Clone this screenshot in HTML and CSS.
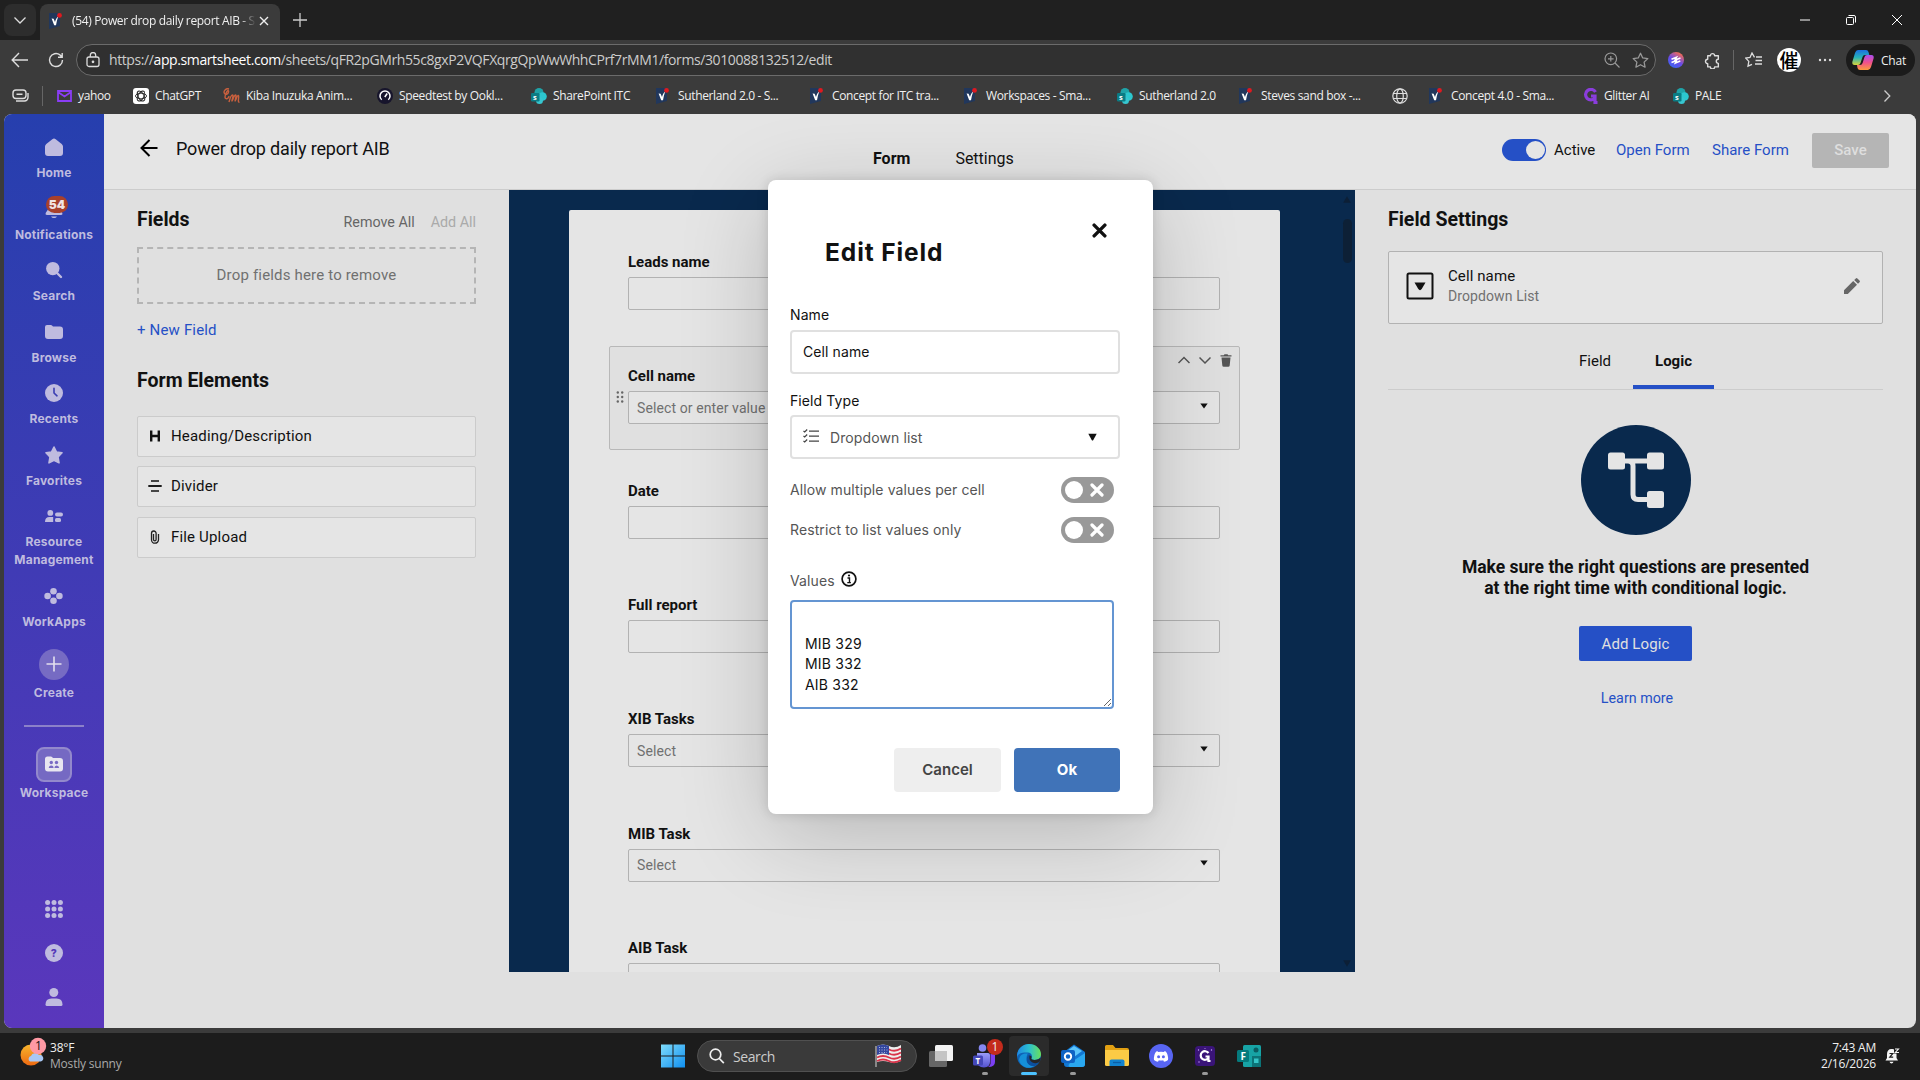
FILE: index.html
```html
<!DOCTYPE html>
<html lang="en">
<head>
    <meta charset="UTF-8">
    <meta name="viewport" content="width=device-width, initial-scale=1.0">
    <title>(54) Power drop daily report AIB</title>
    <link rel="stylesheet" href="styles.css">
</head>
<body>
    <!-- shared icons -->
    <svg class="hidden">
        <symbol id="smartsheet" viewBox="0 0 16 16">
            <path d="M0 0h11v13L0 16z" fill="#21375c"/>
            <path d="M2.600 5.600l2 .1 1.400 3.200c.7-2.800 1.600-4.200 3.200-5.500-1 2.800-1.700 5.600-2.200 8.800H5.200z" fill="#fff"/>
            <circle cx="10.500" cy="2.400" r="2.400" fill="#e0191f"/>
        </symbol>
        <symbol id="sharepoint" viewBox="0 0 16 16">
            <circle cx="8" cy="4.500" r="4.500" fill="#1fa3a8"/>
            <circle cx="11.500" cy="8.500" r="4.300" fill="#2cc7cf"/>
            <circle cx="8.500" cy="12.500" r="3.500" fill="#37c6d0"/>
            <rect x="0" y="5" width="8.500" height="8.500" rx="1.200" fill="#0b7c84"/>
            <text x="2" y="12" font-size="7.500" font-weight="700" fill="#fff">s</text>
        </symbol>
        <symbol id="caret" viewBox="0 0 8 6">
            <path d="M.3.500h7.400L4 5.600z" fill="#111"/>
        </symbol>
        <symbol id="cross" viewBox="0 0 14 14">
            <path d="M2 2l10 10M12 2L2 12" stroke="currentColor" stroke-width="3.200" stroke-linecap="round" fill="none"/>
        </symbol>
    </svg>

    <div class="titlebar">
        <div class="tab-menu"><svg width="14" height="14" viewBox="0 0 14 14"><path d="M1.500 4.500L7 10l5.500-5.500" fill="none" stroke="#ddd" stroke-width="1.300"/></svg></div>
        <div class="tab">
            <svg class="fav" width="16" height="16"><use href="#smartsheet"/></svg>
            <span class="tab-title">(54) Power drop daily report AIB - S</span>
            <svg width="10" height="10" viewBox="0 0 10 10"><path d="M1 1l8 8M9 1L1 9" stroke="#eee" stroke-width="1.400"/></svg>
        </div>
        <svg class="new-tab" width="16" height="16" viewBox="0 0 16 16"><path d="M8 1v14M1 8h14" stroke="#ccc" stroke-width="1.300"/></svg>
        <div class="window-buttons">
            <svg width="12" height="12" viewBox="0 0 12 12"><path d="M1 6h10" stroke="#fff" stroke-width="1"/></svg>
            <svg width="12" height="12" viewBox="0 0 12 12" fill="none" stroke="#fff"><rect x="1.500" y="3.500" width="7" height="7" rx="1"/><path d="M3.500 1.500h5.500a1.500 1.500 0 0 1 1.500 1.500v5.500"/></svg>
            <svg width="12" height="12" viewBox="0 0 12 12"><path d="M1 1l10 10M11 1L1 11" stroke="#fff"/></svg>
        </div>
    </div>

    <div class="toolbar">
        <svg class="nav-back" width="18" height="16" viewBox="0 0 18 16" fill="none" stroke="#ddd" stroke-width="1.400"><path d="M17 8H1.500M8 1L1.200 8 8 15"/></svg>
        <svg class="nav-reload" width="16" height="16" viewBox="0 0 16 16" fill="none" stroke="#ddd" stroke-width="1.400"><path d="M14.500 8A6.500 6.500 0 1 1 12 2.900L14 5M14.200 1v4.300H10"/></svg>
        <div class="address">
            <svg width="14" height="16" viewBox="0 0 14 16" fill="none" stroke="#ddd" stroke-width="1.300"><rect x="1" y="5" width="12" height="9.500" rx="2"/><path d="M4.300 5V3.200a2.700 2.700 0 0 1 5.400 0V5"/><circle cx="7" cy="9.800" r=".7" fill="#ddd"/></svg>
            <span class="url">https://<b>app.smartsheet.com</b>/sheets/qFR2pGMrh55c8gxP2VQFXqrgQpWwWhhCPrf7rMM1/forms/3010088132512/edit</span>
            <svg class="zoom-icon" width="16" height="16" viewBox="0 0 16 16" fill="none" stroke="#999" stroke-width="1.200"><circle cx="6.800" cy="6.800" r="5.800"/><path d="M11 11l4.500 4.500M6.800 4v5.600M4 6.800h5.600"/></svg>
            <svg width="17" height="17" viewBox="0 0 16 16" fill="none" stroke="#999" stroke-width="1.200"><path d="M8 1.200l2.100 4.400 4.800.6-3.500 3.300.9 4.800L8 12l-4.300 2.300.9-4.800L1.100 6.200l4.800-.6z" stroke-linejoin="round"/></svg>
        </div>
        <div class="toolbar-icons">
            <svg class="extension" width="16" height="16" viewBox="0 0 16 16"><defs><linearGradient id="gExt" x1="0" y1="1" x2=".6" y2="0"><stop offset="0" stop-color="#2f6bf5"/><stop offset=".55" stop-color="#6a4be8"/><stop offset="1" stop-color="#f06a5a"/></linearGradient></defs><circle cx="8" cy="8" r="8" fill="url(#gExt)"/><path d="M3.500 7.300l5-2-1.500 2.700 5.500-2M3.500 10.500l5-2-1.200 2.500 5-2" stroke="#fff" stroke-width="1.500" fill="none"/></svg>
            <svg class="puzzle" width="17" height="17" viewBox="0 0 16 16" fill="none" stroke="#ddd" stroke-width="1.300"><path d="M3.500 3.500H6a2 2 0 0 1 4 0h3.500v3.300a1.900 1.900 0 0 0 0 3.900V14H10a2 2 0 0 1-4 0H3.500v-3a2.100 2.100 0 0 1 0-4.200z" stroke-linejoin="round"/></svg>
            <i class="bar-divider"></i>
            <svg class="favorites" width="17" height="16" viewBox="0 0 17 16" fill="none" stroke="#ddd" stroke-width="1.300"><path d="M9.500 5.400L7 1 5 5.500l-4.200.6 3 3.300-.8 4.800L7 12.300M11 5h6M10.500 8.500H17M10 12h7"/></svg>
            <div class="avatar">催</div>
            <svg class="dots" width="14" height="4" viewBox="0 0 14 4" fill="#ddd"><circle cx="2" cy="2" r="1.200"/><circle cx="7" cy="2" r="1.200"/><circle cx="12" cy="2" r="1.200"/></svg>
            <div class="chat">
                <svg width="22" height="20" viewBox="0 0 22 20"><defs><linearGradient id="gCpA" x1="0" y1="0" x2="0" y2="1"><stop offset="0" stop-color="#1c6fe0"/><stop offset=".5" stop-color="#27b3b8"/><stop offset="1" stop-color="#d8d43a"/></linearGradient><linearGradient id="gCpB" x1="0" y1="0" x2="0" y2="1"><stop offset="0" stop-color="#a94df0"/><stop offset=".5" stop-color="#f0508c"/><stop offset="1" stop-color="#fb9a3c"/></linearGradient></defs><path d="M6 0h8q2 0 2.500 2l.8 3H13q-2 0-2.500 2L8.500 13q-.6 2-2.500 2H2.500Q0 15 .3 12L3 3Q4 0 6 0z" fill="url(#gCpA)"/><path d="M16 20H8q-2 0-2.500-2L5 15h3q2 0 2.600-2L12.500 7q.6-2 2.500-2h4.500q2.500 0 2.200 3L19 17q-1 3-3 3z" fill="url(#gCpB)"/></svg>
                <span>Chat</span>
            </div>
        </div>
    </div>

    <div class="bookmarks">
        <svg width="17" height="13" viewBox="0 0 17 13" fill="none" stroke="#ddd" stroke-width="1.400"><rect x="1" y="1" width="13" height="8.500" rx="3"/><path d="M4.500 5.200h6M4 12h8.500a3.500 3.500 0 0 0 3.500-3.500V4"/></svg>
        <i class="bar-divider"></i>
        <div class="bookmark"><svg width="15" height="12" viewBox="0 0 15 12" fill="none" stroke="#8a3df5" stroke-width="1.800"><path d="M1 1h13v10H1zM1 2l6.500 4.500L14 2"/></svg><span>yahoo</span></div>
        <div class="bookmark"><svg width="16" height="16" viewBox="0 0 16 16"><rect width="16" height="16" rx="3" fill="#fff"/><g fill="none" stroke="#222" stroke-width=".9"><ellipse cx="8" cy="8" rx="5.500" ry="2.800"/><ellipse cx="8" cy="8" rx="5.500" ry="2.800" transform="rotate(60 8 8)"/><ellipse cx="8" cy="8" rx="5.500" ry="2.800" transform="rotate(120 8 8)"/></g></svg><span>ChatGPT</span></div>
        <div class="bookmark"><svg width="17" height="16" viewBox="0 0 17 16" fill="none" stroke="#c9603e" stroke-width="1.400"><path d="M6 1C3 0 0 3 1.500 5.500S6 5 5.500 3 2 6 2 9s4 2 4-1M6 14c1-4 2-7 3.500-7s-1 6-.5 6 2-6 3.500-6-.8 6-.3 6 2-6 3.200-5.600S14 15 16.500 14"/></svg><span>Kiba Inuzuka Anim...</span></div>
        <div class="bookmark"><svg width="16" height="16" viewBox="0 0 16 16"><circle cx="8" cy="8" r="8" fill="#17152c"/><path d="M4.700 11.800a5 5 0 1 1 6.600 0M7.800 9l2.400-3.500" fill="none" stroke="#fff" stroke-width="1.500"/></svg><span>Speedtest by Ookl...</span></div>
        <div class="bookmark"><svg width="16" height="16"><use href="#sharepoint"/></svg><span>SharePoint ITC</span></div>
        <div class="bookmark"><svg width="16" height="16"><use href="#smartsheet"/></svg><span>Sutherland 2.0 - S...</span></div>
        <div class="bookmark"><svg width="16" height="16"><use href="#smartsheet"/></svg><span>Concept for ITC tra...</span></div>
        <div class="bookmark"><svg width="16" height="16"><use href="#smartsheet"/></svg><span>Workspaces - Sma...</span></div>
        <div class="bookmark"><svg width="16" height="16"><use href="#sharepoint"/></svg><span>Sutherland 2.0</span></div>
        <div class="bookmark"><svg width="16" height="16"><use href="#smartsheet"/></svg><span>Steves sand box -...</span></div>
        <div class="bookmark"><svg width="16" height="16" viewBox="0 0 16 16" fill="none" stroke="#ddd" stroke-width="1.200"><circle cx="8" cy="8" r="7.200"/><ellipse cx="8" cy="8" rx="3.300" ry="7.200"/><path d="M1.300 5.500h13.400M1.300 10.500h13.400"/></svg></div>
        <div class="bookmark"><svg width="16" height="16"><use href="#smartsheet"/></svg><span>Concept 4.0 - Sma...</span></div>
        <div class="bookmark"><svg width="15" height="16" viewBox="0 0 15 16" fill="none" stroke="#8a3ddc" stroke-width="3.200"><path d="M12.500 4A5.300 5.300 0 1 0 12 10V8H8M12 9v5.500h2.500"/></svg><span>Glitter AI</span></div>
        <div class="bookmark"><svg width="16" height="16"><use href="#sharepoint"/></svg><span>PALE</span></div>
        <svg class="more" width="8" height="14" viewBox="0 0 8 14"><path d="M1.500 1.500L6.800 7l-5.300 5.500" fill="none" stroke="#ccc" stroke-width="1.300"/></svg>
    </div>

    <div class="app">
        <nav class="sidebar">
            <div class="nav-item"><div class="nav-icon"><svg width="18" height="18" viewBox="0 0 18 18"><path d="M7.300 1.200a2.500 2.500 0 0 1 3.400 0l6 4.800A3.300 3.300 0 0 1 18 8.600V15a3 3 0 0 1-3 3H3a3 3 0 0 1-3-3V8.600A3.300 3.300 0 0 1 1.300 6z"/></svg></div><span>Home</span></div>
            <div class="nav-item"><div class="nav-icon bell"><svg width="18" height="18" viewBox="0 0 18 18"><path d="M9 0C5 0 3 3 3 6v3.500L.8 12.800Q0 15 2 15h14q2 0 1.200-2.200L15 9.500V6c0-3-2-6-6-6zM6 16.500h6Q11 18 9 18t-3-1.500z"/></svg><b class="badge">54</b></div><span>Notifications</span></div>
            <div class="nav-item"><div class="nav-icon"><svg width="18" height="18" viewBox="0 0 18 18"><circle cx="7.800" cy="7.600" r="6.700"/><path d="M11 11l5 5" stroke="currentColor" stroke-width="2.400" stroke-linecap="round"/></svg></div><span>Search</span></div>
            <div class="nav-item"><div class="nav-icon"><svg width="18" height="18" viewBox="0 0 18 18"><path d="M0 4a2 2 0 0 1 2-2h4q1 0 2 1.500h7a3 3 0 0 1 3 3V13a3 3 0 0 1-3 3H3a3 3 0 0 1-3-3z"/></svg></div><span>Browse</span></div>
            <div class="nav-item"><div class="nav-icon"><svg width="18" height="18" viewBox="0 0 18 18"><circle cx="9" cy="9" r="9"/><path d="M9 4.200V9l3 2.800" fill="none" stroke="#3a3cb2" stroke-width="1.600" stroke-linecap="round"/></svg></div><span>Recents</span></div>
            <div class="nav-item"><div class="nav-icon"><svg width="18" height="18" viewBox="0 0 18 18"><path d="M9 1l2.500 5 5.500.8-4 4.200 1 5.800L9 14.200l-5 2.600L5 11 1 6.800 6.500 6z" stroke="currentColor" stroke-width="1.600" stroke-linejoin="round"/></svg></div><span>Favorites</span></div>
            <div class="nav-item tall"><div class="nav-icon"><svg width="18" height="12" viewBox="0 0 18 12"><circle cx="5.300" cy="2.900" r="2.900"/><path d="M0 12Q0 7 4.500 7h3.700v5z"/><rect x="10" y="2.500" width="8" height="4" rx="2"/><rect x="10" y="8" width="6" height="4" rx="1.500"/></svg></div><span>Resource<br>Management</span></div>
            <div class="nav-item"><div class="nav-icon"><svg width="19" height="16" viewBox="0 0 19 16"><circle cx="9.500" cy="3.300" r="3.300"/><circle cx="3.600" cy="8" r="3.300"/><circle cx="15.400" cy="8" r="3.300"/><circle cx="9.500" cy="12.700" r="3.300"/></svg></div><span>WorkApps</span></div>
            <div class="nav-item create"><div class="create-icon"><svg width="16" height="16" viewBox="0 0 16 16"><path d="M8 .500v15M.500 8h15" stroke="#e4e0ee" stroke-width="1.600"/></svg></div><span>Create</span></div>
            <div class="nav-line"></div>
            <div class="nav-item workspace"><div class="ws-icon"><svg width="18" height="16" viewBox="0 0 18 16"><path d="M0 3a2.500 2.500 0 0 1 2.500-2.500H6Q7 .500 8 2h7a3 3 0 0 1 3 3v7.500a3 3 0 0 1-3 3H3a3 3 0 0 1-3-3z" fill="#e8e6f0"/><g fill="#7a6bc4"><circle cx="6.300" cy="6.500" r="1.700"/><circle cx="11.500" cy="6.500" r="1.700"/><path d="M3.800 12q0-2.500 2.500-2.500T8.500 12zM9.400 12q0-2.500 2.300-2.500t2.500 2.500z"/></g></svg></div><span>Workspace</span></div>
            <div class="nav-bottom">
                <svg width="18" height="18" viewBox="0 0 18 18"><g id="dots"><circle cx="2.600" cy="2.600" r="2.500"/><circle cx="9" cy="2.600" r="2.500"/><circle cx="15.400" cy="2.600" r="2.500"/></g><use href="#dots" y="6.400"/><use href="#dots" y="12.800"/></svg>
                <svg width="18" height="18" viewBox="0 0 18 18"><circle cx="9" cy="9" r="9"/><text x="5.800" y="12.800" font-size="10.500" font-weight="800" fill="#5338b8">?</text></svg>
                <svg width="18" height="18" viewBox="0 0 18 18"><circle cx="8.800" cy="4.500" r="4.500"/><path d="M.5 16.500q0-6 6-6h5q6 0 6 6 0 1.500-1.500 1.500H2Q.5 18 .5 16.500z"/></svg>
            </div>
        </nav>

        <div class="main">
            <header class="form-header">
                <svg class="back" width="18" height="18" viewBox="0 0 18 18" fill="none" stroke="#000" stroke-width="2"><path d="M17.500 9H2M9.500 1L1.500 9l8 8"/></svg>
                <h1>Power drop daily report AIB</h1>
                <div class="header-tabs"><b>Form</b><span>Settings</span></div>
                <div class="header-actions">
                    <div class="switch-on"><i></i></div>
                    <span class="active-label">Active</span>
                    <a class="open-form">Open Form</a>
                    <a class="share-form">Share Form</a>
                    <button class="save">Save</button>
                </div>
            </header>

            <div class="builder">
                <aside class="left-panel">
                    <div class="panel-head"><h2>Fields</h2><span class="remove-all">Remove All</span><span class="add-all">Add All</span></div>
                    <div class="drop-zone">Drop fields here to remove</div>
                    <a class="new-field">+ New Field</a>
                    <h2 class="elements-title">Form Elements</h2>
                    <div class="element"><svg width="14" height="14" viewBox="0 0 14 14" stroke="#111" stroke-width="2.400"><path d="M3.200 1.500v11M10.800 1.500v11M3.200 7h7.600"/></svg>Heading/Description</div>
                    <div class="element"><svg width="14" height="14" viewBox="0 0 14 14" stroke="#111"><path d="M3 2h8M3 12h8" stroke-width="1.300"/><path d="M.3 7h13.400" stroke-width="1.900"/></svg>Divider</div>
                    <div class="element"><svg width="14" height="14" viewBox="0 0 14 14" fill="none" stroke="#222" stroke-width="1.300"><path d="M5.500 4v5.500a1.300 1.300 0 0 0 2.600 0V3.300a2 2 0 0 0-4.600 0v6.400a3.500 3.500 0 0 0 7 0V4"/></svg>File Upload</div>
                </aside>

                <section class="canvas">
                    <div class="paper">
                        <div class="group"><label>Leads name</label><div class="field"></div></div>
                        <div class="group selected">
                            <label>Cell name</label><div class="field">Select or enter value<svg width="8" height="6"><use href="#caret"/></svg></div>
                            <svg class="drag" width="8" height="12" viewBox="0 0 8 12" fill="#666"><circle cx="1.800" cy="1.500" r="1.200"/><circle cx="6.200" cy="1.500" r="1.200"/><circle cx="1.800" cy="6" r="1.200"/><circle cx="6.200" cy="6" r="1.200"/><circle cx="1.800" cy="10.500" r="1.200"/><circle cx="6.200" cy="10.500" r="1.200"/></svg>
                            <div class="group-tools">
                                <svg width="12" height="12" viewBox="0 0 12 12" fill="none" stroke="#555" stroke-width="1.500"><path d="M.500 9L6 3.500 11.500 9"/></svg>
                                <svg width="12" height="12" viewBox="0 0 12 12" fill="none" stroke="#555" stroke-width="1.500"><path d="M.500 3.500L6 9l5.500-5.500"/></svg>
                                <svg width="12" height="13" viewBox="0 0 12 13" fill="#555"><path d="M.5 1.300h3.300L4.500.200h3l.7 1.100h3.300v1.300H.500zM1.500 3.500h9l-.8 8q-.2 1.300-1.400 1.300H3.700q-1.200 0-1.400-1.300z"/></svg>
                            </div>
                        </div>
                        <div class="group"><label>Date</label><div class="field"></div></div>
                        <div class="group"><label>Full report</label><div class="field"></div></div>
                        <div class="group"><label>XIB Tasks</label><div class="field">Select<svg width="8" height="6"><use href="#caret"/></svg></div></div>
                        <div class="group"><label>MIB Task</label><div class="field">Select<svg width="8" height="6"><use href="#caret"/></svg></div></div>
                        <div class="group"><label>AIB Task</label><div class="field"></div></div>
                    </div>
                    <div class="scrollbar">
                        <svg width="8" height="7" viewBox="0 0 8 7"><path d="M4 .300L7.800 6.700H.200z" fill="#0c1f36"/></svg>
                        <i class="thumb"></i>
                        <svg class="down" width="8" height="7" viewBox="0 0 8 7"><path d="M4 6.700L7.800.300H.200z" fill="#0c1f36"/></svg>
                    </div>
                </section>

                <aside class="right-panel">
                    <h2>Field Settings</h2>
                    <div class="field-card">
                        <svg width="28" height="28" viewBox="0 0 28 28"><rect x="1.500" y="1.500" width="25" height="25" rx="1.500" fill="none" stroke="#111" stroke-width="2"/><path d="M8.500 10.500h11l-3.800 6.600q-1.700 2.200-3.400 0z" fill="#111"/></svg>
                        <div class="card-text"><span>Cell name</span><small>Dropdown List</small></div>
                        <svg width="16" height="16" viewBox="0 0 16 16" fill="#666"><path d="M0 16v-3.800L9.200 3 13 6.800 3.800 16zM10.200 2L11.800.500q.8-.8 1.600 0l2.100 2.100q.8.800 0 1.600L14 5.800z"/></svg>
                    </div>
                    <div class="settings-tabs"><span>Field</span><b>Logic</b></div>
                    <div class="logic">
                        <svg width="110" height="110" viewBox="0 0 110 110"><circle cx="55" cy="55" r="55" fill="#09294d"/><g fill="#e5e5e5"><rect x="27" y="27.500" width="17" height="17" rx="2.500"/><rect x="66" y="27.500" width="17" height="17" rx="2.500"/><rect x="66" y="66" width="17" height="17" rx="2.500"/></g><path d="M43 36h24M47 36q5 0 5 5v28.500q0 5 5 5h10" fill="none" stroke="#e5e5e5" stroke-width="5"/></svg>
                        <h3>Make sure the right questions are presented<br>at the right time with conditional logic.</h3>
                        <button class="add-logic">Add Logic</button>
                        <a class="learn">Learn more</a>
                    </div>
                </aside>
            </div>
        </div>
    </div>

    <div class="modal">
        <div class="modal-head">
            <h2>Edit Field</h2>
            <svg class="close" width="15" height="15"><use href="#cross"/></svg>
        </div>
        <label class="name-label" for="fieldName">Name</label>
        <input type="text" id="fieldName" value="Cell name" autocomplete="off">
        <label class="type-label">Field Type</label>
        <div class="type-select">
            <svg width="16" height="14" viewBox="0 0 16 14" fill="none" stroke="#444" stroke-width="1.200"><path d="M6 2.200h10M6 7.200h10M6 12.200h10M.5 2l1.200 1L4.200.500M.5 7l1.200 1 2.500-2.500M.5 12l1.200 1 2.500-2.500"/></svg>
            <span>Dropdown list</span>
            <svg class="arrow" width="9" height="8" viewBox="0 0 9 8"><path d="M.300.800h8.400L5.300 7q-.8 1-1.600 0z" fill="#111"/></svg>
        </div>
        <div class="option first"><span>Allow multiple values per cell</span><div class="switch-off"><i></i><svg width="14" height="14"><use href="#cross"/></svg></div></div>
        <div class="option"><span>Restrict to list values only</span><div class="switch-off"><i></i><svg width="14" height="14"><use href="#cross"/></svg></div></div>
        <div class="values-label">Values <svg width="16" height="16" viewBox="0 0 16 16"><circle cx="8" cy="8" r="6.900" fill="none" stroke="#111" stroke-width="1.700"/><path d="M6.500 7h2v4.500M6.300 11.600h3.600" fill="none" stroke="#111" stroke-width="1.400"/><circle cx="8" cy="4.500" r="1.100" fill="#111"/></svg></div>
        <textarea>

MIB 329
MIB 332
AIB 332</textarea>
        <div class="modal-buttons"><button class="cancel">Cancel</button><button class="ok">Ok</button></div>
    </div>

    <div class="taskbar">
        <div class="weather">
            <svg width="30" height="30" viewBox="0 0 30 30"><defs><linearGradient id="gSun" x1="0" y1="0" x2="0" y2="1"><stop offset="0" stop-color="#f7b52c"/><stop offset="1" stop-color="#ee6a12"/></linearGradient></defs><circle cx="13" cy="18" r="10.500" fill="url(#gSun)"/><path d="M12 24.500a3 3 0 0 1 1-5.500 4.500 4 0 0 1 8-1 3.500 3.300 0 0 1 1.500 6.500z" fill="#a9c8f5"/><circle cx="20" cy="9" r="8.200" fill="#ff99a4"/><text x="17" y="13.200" font-size="12" fill="#111">1</text></svg>
            <div class="weather-text"><span>38°F</span><span class="muted">Mostly sunny</span></div>
        </div>
        <div class="task-icons">
            <div class="task"><svg width="24" height="24" viewBox="0 0 24 24"><defs><linearGradient id="gWin" x1="0" y1="0" x2="1" y2="1"><stop offset="0" stop-color="#7fdcfb"/><stop offset="1" stop-color="#0f8ff0"/></linearGradient></defs><path d="M0 .500h11.500v11H0zM12.500.500H24v11H12.500zM0 12.500h11.500v11H0zM12.500 12.500H24v11H12.500z" fill="url(#gWin)"/></svg></div>
            <div class="search-box">
                <svg width="16" height="16" viewBox="0 0 16 16" fill="none" stroke="#eee" stroke-width="1.700"><circle cx="6.500" cy="6.500" r="5.300"/><path d="M10.300 10.500l4.500 4.700"/></svg>
                <span>Search</span>
                <svg width="27" height="24" viewBox="0 0 27 24"><path d="M1 2v21" stroke="#aaa" stroke-width="1.400"/><path d="M2 2q6-3 12 0t12-1v16q-6 3-12 1T2 18z" fill="#eee"/><path d="M2 5.500q6-3 12 0t12-1M2 9.500q6-3 12 0t12-1M2 13.500q6-3 12 0t12-1M2 17q6-3 12 0t12-1" fill="none" stroke="#d8344a" stroke-width="1.900"/><path d="M2 2q6-3 12 0v9q-6-3-12 0z" fill="#34479e"/><path d="M4 3.500h8M4 6h9M4 8.500h8" stroke="#c9d0ee" stroke-width=".8" stroke-dasharray="1 1.500"/></svg>
            </div>
            <div class="task"><svg width="24" height="22" viewBox="0 0 24 22"><rect x="6" width="18" height="16" rx="1.500" fill="#f3f3f3"/><rect y="6" width="18" height="16" rx="1.500" fill="#666"/><rect x="6" y="6" width="12" height="10" fill="#c4c4c4"/></svg></div>
            <div class="task open"><svg width="24" height="24" viewBox="0 0 24 24"><defs><linearGradient id="gTeams" x1="0" y1="0" x2="0" y2="1"><stop offset="0" stop-color="#9a9cf8"/><stop offset="1" stop-color="#5452d0"/></linearGradient></defs><circle cx="9.500" cy="4" r="3.800" fill="#8587f0"/><circle cx="18.500" cy="5.500" r="3" fill="#6a6ce0"/><path d="M4 9h11q2 0 2 2v7q0 5-6 5.500Q4 23 4 17z" fill="url(#gTeams)"/><path d="M17.500 10H22v8q0 5-7 5 3-2 2.500-5z" fill="#7b3ff2"/><rect x="0" y="11.500" width="10" height="10" rx="1.500" fill="#4447b8"/><text x="2.600" y="19.800" font-size="8" font-weight="700" fill="#fff">T</text></svg><b class="count">1</b></div>
            <div class="task current"><svg width="24" height="24" viewBox="0 0 24 24"><defs><linearGradient id="gEdgeA" x1="0" y1="0" x2="1" y2="0"><stop offset="0" stop-color="#1e88e5"/><stop offset=".5" stop-color="#2cc0cf"/><stop offset="1" stop-color="#6ae05a"/></linearGradient></defs><circle cx="12" cy="12" r="12" fill="#0f62b5"/><path d="M0 11C1 4 6 0 12 0c7 0 12 5 12 10 0 4-3 6-6.500 6-3 0-3.800-1.500-3-2.500 1-1.500.5-4.500-3.500-5C6 8 1 9 0 13z" fill="url(#gEdgeA)"/><path d="M14.500 13.500c-.8 1 0 2.500 3 2.500 2.500 0 4.500-1 5.500-2.300C22 20 19 22 16 22c-5 0-7-4-6.500-7 .2-1.800 1-3 2.500-4 2.500.3 3 2 2.500 2.500z" fill="#0d4f9c"/><path d="M14.500 13.500c-.8 1 0 2.500 3 2.500 3 0 5-1 6.500-2.500L22.500 18Q19 20 15.500 18.500 11.500 16.500 12.500 11.500q2.500.500 2 2z" fill="#262626"/><path d="M9.500 14C9 20 13 22.500 17 22 12 26 3 23 2 15.500 3 10 7 9 11 9.500c-1 .8-1.400 3-1.500 4.500z" fill="#1590d8"/></svg></div>
            <div class="task open"><svg width="24" height="24" viewBox="0 0 24 24"><path d="M3 8l10-7.500L24 8v12q0 3-3 3H6q-3 0-3-3z" fill="#1278d4"/><path d="M6 7l7-5 8 5-8 6z" fill="#5cc4fa"/><path d="M24 9L9 19q-3 3 0 4h12q3 0 3-3z" fill="#2aa8f0"/><rect y="6" width="14" height="13" rx="2" fill="#0f63c4"/><circle cx="7" cy="12.500" r="3.200" fill="none" stroke="#fff" stroke-width="1.900"/></svg></div>
            <div class="task"><svg width="24" height="22" viewBox="0 0 24 22"><path d="M0 1.500Q0 0 1.500 0H8l2.500 3H22q2 0 2 2v4H0z" fill="#e2a012"/><path d="M0 5h24v14.500q0 1.500-1.500 1.500h-21Q0 21 0 19.500z" fill="#fccb45"/><path d="M4.500 21v-4.500q0-2 2-2h11q2 0 2 2V21z" fill="#1283cf"/><path d="M8 17.500h8" stroke="#0b5ea5" stroke-width="1.300"/></svg></div>
            <div class="task"><svg width="24" height="24" viewBox="0 0 24 24"><circle cx="12" cy="12" r="12" fill="#5865f2"/><path d="M8.500 7.200L7.200 7.600Q4.500 11 5 16q2 1.600 4 1.800l.8-1.500q2.200.5 4.400 0l.8 1.500q2-.2 4-1.800.500-5-2.200-8.400l-1.300-.4-.8.9q-2.700-.500-5.400 0z" fill="#fff"/><circle cx="9.600" cy="12.700" r="1.500" fill="#5865f2"/><circle cx="14.400" cy="12.700" r="1.500" fill="#5865f2"/></svg></div>
            <div class="task open"><svg width="20" height="20" viewBox="0 0 20 20"><rect width="20" height="20" rx="3.500" fill="#3a1478"/><path d="M13.500 7A4.300 4.300 0 1 0 13.500 12V10.500H10.500M13.500 12v3h2" fill="none" stroke="#fff" stroke-width="2.200"/><g fill="#c9a6ff"><circle cx="3.500" cy="4" r=".7"/><circle cx="16.500" cy="4" r=".7"/><circle cx="4" cy="16" r=".7"/><circle cx="10" cy="2.500" r=".5"/></g></svg></div>
            <div class="task"><svg width="24" height="22" viewBox="0 0 24 22"><rect x="6" width="18" height="22" rx="1.500" fill="#17a3a5"/><rect x="15" y="11" width="9" height="11" fill="#0c7377"/><circle cx="19" cy="5" r="2.500" fill="#0a5d62"/><rect x="17" y="13.500" width="4.500" height="4.500" fill="#35c5c7"/><rect y="5" width="12" height="12" rx="1.500" fill="#057a7d"/><text x="3.500" y="14.500" font-size="10" font-weight="700" fill="#fff">F</text></svg></div>
        </div>
        <div class="tray">
            <div class="clock"><span>7:43 AM</span><span>2/16/2026</span></div>
            <svg width="15" height="16" viewBox="0 0 15 16"><path d="M6.500 1C3.500 1 2 3 2 6v4L.5 12.500h12.500L11.500 10V6c0-3-2-5-5-5zM4.500 13.800h4Q8 15.500 6.500 15.500t-2-1.700z" fill="#f5f5f5"/><path d="M9 0h6v5.500H9z" fill="#1c1c1c"/><path d="M4.500 5.500h3.300L4.800 9.200h3.400" fill="none" stroke="#1c1c1c" stroke-width="1.200"/><path d="M10 1h3.500L10.300 4.500H14" fill="none" stroke="#f5f5f5" stroke-width="1.100"/></svg>
        </div>
    </div>
</body>
</html>
```
FILE: styles.css
```css
* {
    box-sizing: border-box;
}
body {
    margin: 0;
    width: 1920px;
    height: 1080px;
    overflow: hidden;
    background: #3b3b3b;
    font-family: Roboto, sans-serif;
    color: #111;
    display: flex;
    flex-direction: column;
}
svg {
    flex: none;
    display: block;
}
h1, h2, h3 {
    margin: 0;
    font-weight: 700;
}
button {
    border: none;
    padding: 0;
    font-family: inherit;
}
.hidden {
    display: none;
}

/* browser */
.titlebar, .toolbar, .bookmarks, .taskbar {
    font-family: "Open Sans", "Noto Sans CJK SC", sans-serif;
    color: #f0f0f0;
    font-size: 12px;
    white-space: nowrap;
}
.titlebar {
    height: 40px;
    background: #202020;
    display: flex;
    align-items: center;
    padding-left: 4px;
    flex: none;
}
.tab-menu {
    width: 32px;
    height: 32px;
    border-radius: 8px;
    background: #2d2d2d;
    display: flex;
    align-items: center;
    justify-content: center;
}
.tab {
    width: 240px;
    height: 36px;
    margin: 4px 0 0 4px;
    padding: 0 11px 3px 9px;
    border-radius: 8px 8px 0 0;
    background: #3b3b3b;
    display: flex;
    align-items: center;
}
.tab-title {
    width: 184px;
    margin-left: 7px;
    overflow: hidden;
    letter-spacing: -0.35px;
    -webkit-mask-image: linear-gradient(90deg, #000 168px, transparent 184px);
}
.tab > svg:last-child {
    margin-left: auto;
}
.new-tab {
    margin-left: 12px;
}
.window-buttons {
    margin-left: auto;
    margin-right: 17px;
    display: flex;
    gap: 34px;
}
.toolbar {
    height: 40px;
    display: flex;
    align-items: center;
    padding-left: 11px;
    flex: none;
}
.nav-reload {
    margin-left: 19px;
}
.address {
    width: 1580px;
    height: 32px;
    margin-left: 12px;
    padding: 0 6px 0 9px;
    border: 1px solid #6b6b6b;
    border-radius: 16px;
    background: #303030;
    display: flex;
    align-items: center;
}
.url {
    margin: -1px 0 0 9px;
    font-size: 14px;
    color: #ccc;
    letter-spacing: -0.4px;
}
.url b {
    font-weight: 400;
    color: #fff;
}
.zoom-icon {
    margin-left: auto;
    margin-right: 12px;
}
.toolbar-icons {
    display: flex;
    align-items: center;
    margin-left: 12px;
}
.puzzle {
    margin-left: 20px;
    margin-right: 12px;
}
.favorites {
    margin-left: 11px;
}
.bar-divider {
    width: 1px;
    height: 20px;
    background: #666;
}
.avatar {
    width: 24px;
    height: 24px;
    margin: 0 17px 0 15px;
    border-radius: 50%;
    background: #fff;
    color: #000;
    font: 500 19px/24px "Noto Sans CJK TC", sans-serif;
    display: flex;
    align-items: center;
    justify-content: center;
}
.chat {
    width: 69px;
    height: 32px;
    margin-left: 14px;
    border-radius: 16px;
    background: #1b1b1b;
    display: flex;
    align-items: center;
    padding-left: 6px;
    gap: 7px;
    letter-spacing: -0.2px;
}
.bookmarks {
    height: 34px;
    display: grid;
    grid-template-columns: 30px 15px 76px 90px 154px 154px 125px 154px 154px 153px 122px 153px 37px 154px 90px 210px 8px;
    align-items: center;
    padding-left: 12px;
    padding-bottom: 3px;
    flex: none;
}
.bookmark {
    display: flex;
    align-items: center;
    gap: 6px;
    letter-spacing: -0.35px;
}

/* app shell */
.app {
    width: 1912px;
    height: 914px;
    margin-left: 4px;
    border-radius: 8px;
    overflow: hidden;
    display: flex;
    background: #e0e0e0;
    flex: none;
}
.sidebar {
    width: 100px;
    padding-top: 17px;
    background: linear-gradient(#263fae, #5a37bc);
    color: #bfbbdf;
    display: flex;
    flex-direction: column;
    align-items: center;
    font: 700 12px/18px Inter, sans-serif;
    letter-spacing: 0.2px;
}
.sidebar svg {
    fill: currentColor;
}
.nav-item {
    height: 61.5px;
    display: flex;
    flex-direction: column;
    align-items: center;
    text-align: center;
}
.nav-icon {
    height: 32px;
    margin-bottom: 1px;
    display: flex;
    align-items: center;
}
.nav-item.tall {
    height: 80px;
}
.bell {
    position: relative;
}
.badge {
    position: absolute;
    left: 1px;
    top: 3px;
    width: 22px;
    height: 17px;
    border-radius: 9px;
    background: #a8402c;
    color: #f0e4e4;
    line-height: 17px;
    letter-spacing: 0;
}
.nav-item.create {
    height: 76px;
    padding-top: 7px;
}
.create-icon {
    width: 30px;
    height: 31px;
    margin-bottom: 4px;
    border-radius: 50%;
    background: #766bc3;
    display: flex;
    align-items: center;
    justify-content: center;
}
.nav-line {
    width: 60px;
    height: 2px;
    margin-top: 7px;
    background: #8b81c9;
}
.nav-item.workspace {
    margin-top: 20px;
}
.ws-icon {
    width: 36px;
    height: 35px;
    margin-bottom: 2px;
    border: 2px solid #9389cc;
    border-radius: 8px;
    background: #7569c3;
    display: flex;
    align-items: center;
    justify-content: center;
}
.nav-bottom {
    margin-top: auto;
    margin-bottom: 22px;
    display: flex;
    flex-direction: column;
    gap: 26px;
}
.main {
    flex: 1;
}
.form-header {
    height: 76px;
    background: #e5e5e5;
    border-bottom: 1px solid #ccc;
    display: flex;
    padding-left: 36px;
}
.back {
    margin-top: 25px;
}
.form-header h1 {
    width: 697px;
    margin: 23px 0 0 18px;
    font-size: 18px;
    font-weight: 400;
    line-height: 24px;
    letter-spacing: -0.18px;
}
.header-tabs {
    width: 629px;
    padding-top: 34.5px;
    font-size: 16px;
    line-height: 20px;
}
.header-tabs span {
    margin-left: 45px;
}
.header-actions {
    display: flex;
    align-items: center;
    height: 36px;
    margin-top: 18px;
    font-size: 15px;
}
.switch-on {
    width: 44px;
    height: 22px;
    border-radius: 11px;
    background: #2550c6;
    display: flex;
    justify-content: flex-end;
    padding: 2px 1px;
}
.switch-on i {
    width: 19px;
    height: 18px;
    border-radius: 50%;
    background: #e5e5e5;
}
.active-label {
    width: 62px;
    margin-left: 8px;
}
a {
    color: #2550c6;
}
.open-form {
    width: 96px;
}
.share-form {
    width: 100px;
}
.save {
    width: 77px;
    height: 35px;
    border-radius: 2px;
    background: #b5b5b5;
    color: #dedede;
    font-size: 15px;
    font-weight: 500;
}
.builder {
    display: flex;
    height: 782px;
}

/* left panel */
.left-panel {
    width: 405px;
    padding: 17px 33px 0;
    font-size: 15px;
    letter-spacing: 0.17px;
}
.left-panel h2, .right-panel h2 {
    font-size: 19.5px;
    line-height: 26px;
    letter-spacing: 0;
}
.panel-head {
    display: flex;
    line-height: 30px;
}
.remove-all, .add-all {
    font-size: 14.3px;
    letter-spacing: 0;
}
.remove-all {
    margin-left: auto;
    margin-right: 16px;
    color: #666;
}
.add-all {
    color: #aaa;
}
.drop-zone {
    height: 57px;
    margin-top: 10px;
    border: 2px dashed #b5b5b5;
    color: #707070;
    line-height: 52px;
    text-align: center;
}
.new-field {
    display: block;
    margin-top: 16px;
    line-height: 20px;
}
.left-panel .elements-title {
    margin: 28px 0 22px;
}
.element {
    height: 41px;
    margin-bottom: 9.3px;
    padding: 0 0 1px 10px;
    border: 1px solid #cbcbcb;
    border-radius: 2px;
    background: #e5e5e5;
    display: flex;
    align-items: center;
    gap: 9px;
}

/* form preview */
.canvas {
    width: 846px;
    padding-left: 60px;
    background: #09294d;
    display: flex;
    overflow: hidden;
}
.paper {
    width: 711px;
    height: 860px;
    margin-top: 20px;
    padding: 40px 60px 0 59px;
    border-radius: 2px 2px 0 0;
    background: #e5e5e5;
}
.group {
    height: 114.33px;
}
.group label {
    display: block;
    font-size: 15px;
    font-weight: 700;
    line-height: 24px;
    margin-bottom: 3px;
}
.field {
    height: 33px;
    padding: 0 11px 0 8px;
    border: 1px solid #b2b2b2;
    border-radius: 2px;
    background: #e5e5e5;
    color: #707070;
    font-size: 14px;
    letter-spacing: 0.1px;
    display: flex;
    align-items: center;
    justify-content: space-between;
}
.field svg {
    margin-bottom: 4px;
}
.group.selected {
    position: relative;
    height: 104px;
    margin: -18px -20px 28.33px -19px;
    padding: 17px 19px 0 18px;
    border: 1px solid #b8b8b8;
    border-radius: 2px;
    background: #e0e0e0;
}
.drag {
    position: absolute;
    left: 6px;
    top: 44px;
}
.group-tools {
    position: absolute;
    right: 7px;
    top: 7px;
    display: flex;
    gap: 9px;
}
.scrollbar {
    margin-left: auto;
    width: 16px;
    padding: 6px 4px 5px 4px;
    display: flex;
    flex-direction: column;
}
.thumb {
    width: 9px;
    height: 44px;
    margin-top: 16px;
    border-radius: 5px;
    background: #0d2036;
}
.scrollbar .down {
    margin-top: auto;
}

/* right panel */
.right-panel {
    flex: 1;
    padding: 17px 33px 0;
}
.field-card {
    height: 73px;
    margin-top: 18px;
    padding: 0 22px 3px 17px;
    border: 1px solid #b2b2b2;
    border-radius: 2px;
    background: #e5e5e5;
    display: flex;
    align-items: center;
}
.card-text {
    flex: 1;
    margin: 0 0 1px 14px;
    display: flex;
    flex-direction: column;
    font-size: 15px;
    line-height: 20px;
    letter-spacing: 0.1px;
}
.card-text small {
    font-size: 14px;
    color: #707070;
}
.settings-tabs {
    height: 66px;
    border-bottom: 1px solid #ccc;
    display: flex;
    justify-content: center;
    font-size: 15px;
    line-height: 75px;
}
.settings-tabs span, .settings-tabs b {
    padding: 0 22px;
    font-weight: 400;
}
.settings-tabs b {
    font-weight: 700;
    border-bottom: 4px solid #2550c6;
}
.logic {
    display: flex;
    flex-direction: column;
    align-items: center;
    padding-top: 35px;
    text-align: center;
}
.logic h3 {
    margin-top: 22px;
    font-size: 17.5px;
    line-height: 21px;
}
.add-logic {
    width: 113px;
    height: 35px;
    margin-top: 27px;
    border-radius: 2px;
    background: #2550c6;
    color: #e0e0e0;
    font-size: 15px;
    letter-spacing: 0.1px;
}
.learn {
    margin: 27px 0 0 3px;
    font-size: 14.3px;
    line-height: 20px;
}

/* edit field dialog */
.modal {
    position: absolute;
    left: 768px;
    top: 180px;
    width: 385px;
    height: 634px;
    padding: 0 33px 0 22px;
    border-radius: 8px;
    background: #fff;
    box-shadow: 0 0 12px rgba(0, 0, 0, .14), 0 20px 90px rgba(0, 0, 0, .2);
    font: 14px/18px Inter, sans-serif;
    letter-spacing: 0.1px;
}
.modal-head {
    display: flex;
    justify-content: space-between;
    height: 126px;
    padding: 0 13px 0 35px;
}
.modal-head h2 {
    margin-top: 57px;
    font-size: 24.5px;
    line-height: 30px;
    letter-spacing: 0.9px;
}
.close {
    margin-top: 43px;
}
.modal label {
    display: block;
}
.modal input {
    width: 330px;
    height: 44px;
    margin-top: 6px;
    padding: 0 10px 2px 11px;
    border: 2px solid #e0e0e0;
    border-radius: 4px;
    font: inherit;
    letter-spacing: inherit;
    color: #111;
    display: block;
}
.type-label {
    margin-top: 18px;
}
.type-select {
    height: 44px;
    margin-top: 5px;
    padding: 1px 21px 0 11px;
    border: 2px solid #e0e0e0;
    border-radius: 4px;
    color: #555;
    display: flex;
    align-items: center;
    gap: 11px;
}
.type-select svg {
    margin-bottom: 4px;
}
.type-select .arrow {
    margin-left: auto;
    margin-bottom: 2px;
}
.option {
    height: 26px;
    margin-top: 14px;
    padding-right: 6px;
    color: #555;
    display: flex;
    justify-content: space-between;
    align-items: center;
}
.option.first {
    margin-top: 18px;
}
.switch-off {
    width: 53px;
    height: 26px;
    padding: 0 10px 0 4px;
    border-radius: 13px;
    background: #999;
    color: #fff;
    display: flex;
    align-items: center;
    justify-content: space-between;
}
.switch-off i {
    width: 18px;
    height: 18px;
    border-radius: 50%;
    background: #fff;
}
.values-label {
    margin-top: 29px;
    color: #555;
    display: flex;
    gap: 6px;
}
.values-label svg {
    margin-top: -1px;
}
.modal textarea {
    display: block;
    width: 324px;
    height: 109px;
    margin-top: 10px;
    padding: 12px 13px 0;
    border: 2px solid #6495d2;
    border-radius: 4px;
    font: 14px/20.2px Inter, sans-serif;
    letter-spacing: 0.2px;
    color: #111;
    overflow: hidden;
}
.modal-buttons {
    display: flex;
    justify-content: flex-end;
    gap: 13px;
    margin-top: 39px;
}
.modal-buttons button {
    width: 107px;
    height: 44px;
    padding-bottom: 1px;
    border-radius: 4px;
    background: #eee;
    color: #444;
    font-size: 15px;
    font-weight: 600;
}
.modal-buttons .ok {
    width: 106px;
    background: #4073b8;
    color: #fff;
    font-weight: 700;
}

/* windows taskbar */
.taskbar {
    margin-top: 5px;
    height: 47px;
    background: #1c1c1c;
    display: flex;
}
.weather {
    width: 659px;
    padding: 4px 0 0 18px;
    display: flex;
    gap: 2px;
}
.weather-text, .clock {
    display: flex;
    flex-direction: column;
    line-height: 16px;
    margin-top: 3px;
    letter-spacing: -0.2px;
}
.muted {
    color: #aaa;
}
.task-icons {
    display: flex;
    align-items: center;
    padding-bottom: 1px;
}
.task {
    position: relative;
    width: 40px;
    height: 40px;
    margin-right: 4px;
    border-radius: 4px;
    display: flex;
    align-items: center;
    justify-content: center;
}
.task:first-child {
    width: 28px;
    margin-right: 10px;
}
.task.open::after, .task.current::after {
    content: "";
    position: absolute;
    bottom: 1px;
    width: 6px;
    height: 3px;
    border-radius: 2px;
    background: #999;
}
.task.current {
    background: #2b2b2b;
}
.task.current::after {
    width: 16px;
    background: #4cc2ff;
}
.count {
    position: absolute;
    left: 22px;
    top: 3px;
    width: 16px;
    height: 16px;
    border-radius: 50%;
    background: #c42b1c;
    font-weight: 400;
    line-height: 16px;
    text-align: center;
}
.search-box {
    width: 220px;
    height: 32px;
    margin-right: 4px;
    padding: 0 14px 0 11px;
    border: 1px solid #505050;
    border-radius: 16px;
    background: #3a3a3a;
    color: #ccc;
    font-size: 14px;
    display: flex;
    align-items: center;
}
.search-box span {
    flex: 1;
    margin-left: 8px;
    letter-spacing: -0.4px;
}
.tray {
    margin-left: auto;
    margin-right: 20px;
    padding-top: 4px;
    display: flex;
    gap: 9px;
    text-align: right;
}
.tray svg {
    margin-top: 11px;
}
```
